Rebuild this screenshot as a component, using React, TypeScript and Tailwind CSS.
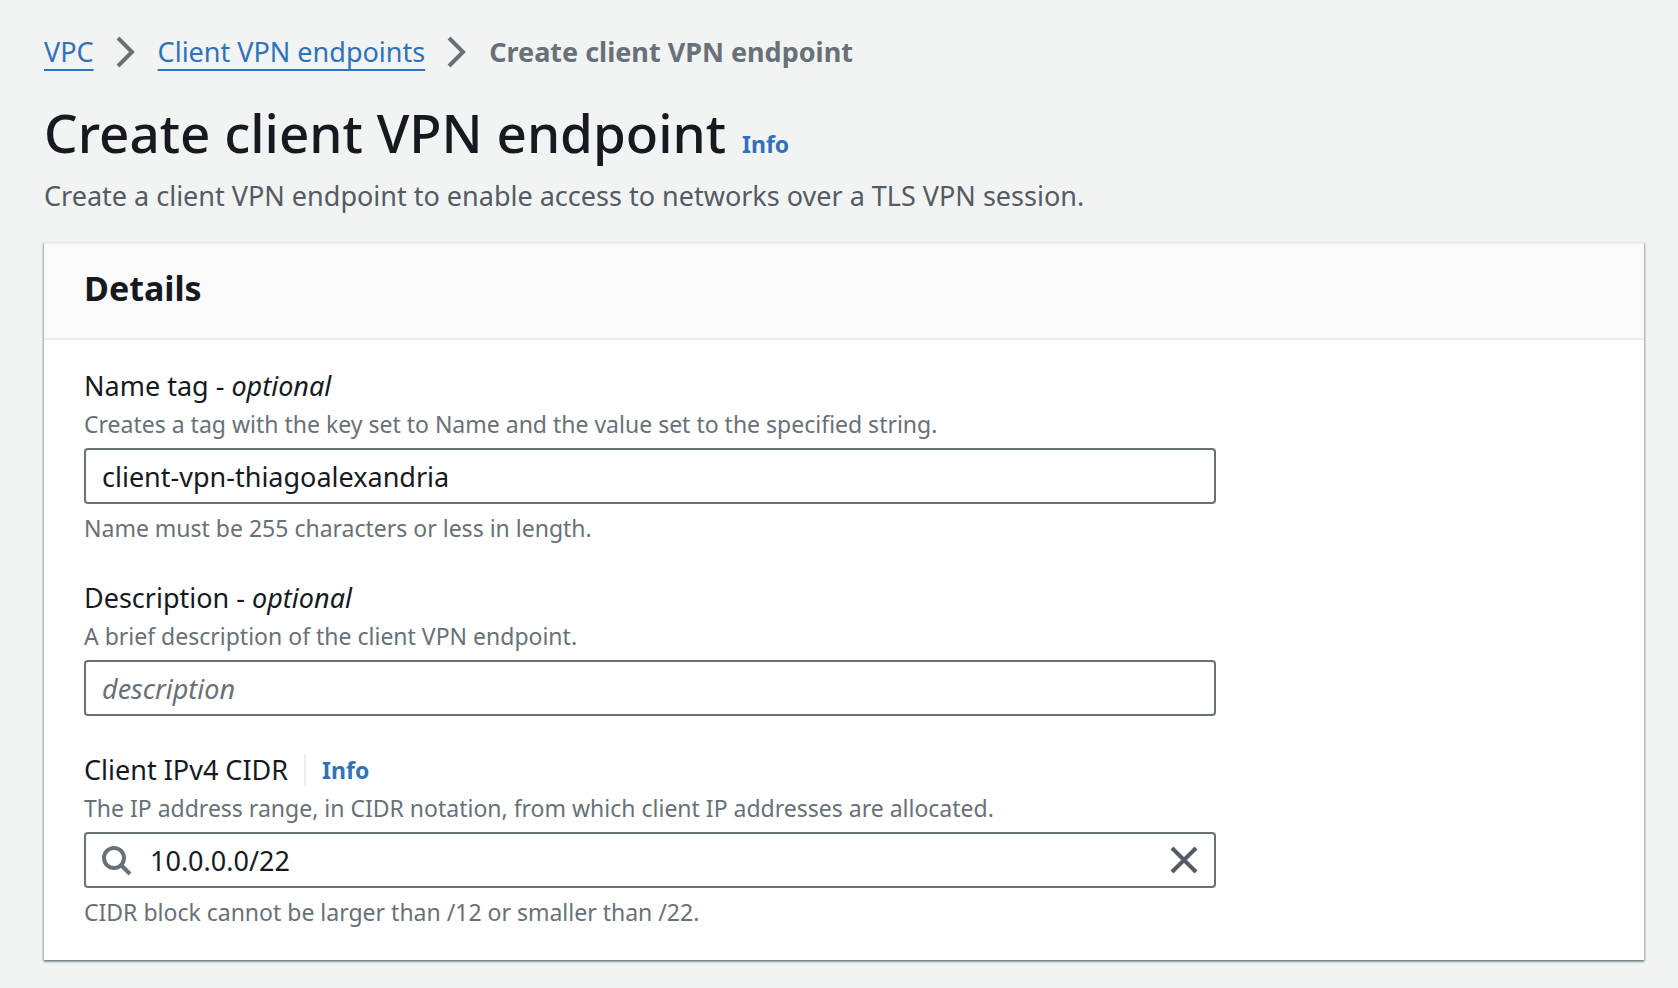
import { useState, type ReactNode } from "react";

function ChevronIcon() {
  return (
    <svg className="size-8 shrink-0 text-[#687078]" viewBox="0 0 16 16" fill="none" stroke="currentColor" strokeWidth="2" aria-hidden="true">
      <path d="m4 1 7 7-7 7" />
    </svg>
  );
}

function SearchIcon() {
  return (
    <svg className="size-8 shrink-0 text-[#687078]" viewBox="0 0 16 16" fill="none" stroke="currentColor" strokeWidth="2" aria-hidden="true">
      <circle cx="7" cy="7" r="5" />
      <path d="m15 15-4.5-4.5" />
    </svg>
  );
}

function CloseIcon() {
  return (
    <svg className="size-8" viewBox="0 0 16 16" fill="none" stroke="currentColor" strokeWidth="2" aria-hidden="true">
      <path d="m2 2 12 12M14 2 2 14" />
    </svg>
  );
}

type FieldProps = {
  id: string;
  label: string;
  optional?: boolean;
  info?: boolean;
  hint: string;
  constraint?: string;
  children: ReactNode;
};

function Field({ id, label, optional, info, hint, constraint, children }: FieldProps) {
  return (
    <div>
      <div className="flex items-center gap-4 text-[27px] leading-[44px]">
        <label htmlFor={id}>
          {label}
          {optional && (
            <>
              {" - "}
              <i>optional</i>
            </>
          )}
        </label>
        {info && (
          <a href="#cidr-info" className="flex h-8 items-center border-l-2 border-[#eaeded] pl-4 text-[23px] font-bold text-[#3072b9]">
            Info
          </a>
        )}
      </div>
      <p className="text-[23px] leading-8 text-[#687078]">{hint}</p>
      <div className="mt-2 flex h-14 items-center rounded-[4px] border-2 border-[#687078] bg-white">{children}</div>
      {constraint && <p className="mt-2 text-[23px] leading-8 text-[#687078]">{constraint}</p>}
    </div>
  );
}

const inputClass = "h-full min-w-0 flex-1 bg-transparent pt-px text-[27px] outline-none placeholder:italic placeholder:text-[#687078]";
const linkClass = "text-[#3072b9] underline decoration-2 underline-offset-[7px] [text-decoration-skip-ink:none]";

export default function App() {
  const [name, setName] = useState("client-vpn-thiagoalexandria");
  const [description, setDescription] = useState("");
  const [cidr, setCidr] = useState("10.0.0.0/22");

  return (
    <div className="min-h-screen bg-[#f2f3f3] pt-8 pr-[34px] pb-7 pl-11 font-['Noto_Sans',sans-serif] text-[#16191f]">
      <nav aria-label="Breadcrumbs">
        <ol className="flex items-center gap-4 text-[27px] leading-10">
          <li>
            <a href="#vpc" className={linkClass}>VPC</a>
          </li>
          <li aria-hidden="true"><ChevronIcon /></li>
          <li>
            <a href="#endpoints" className={linkClass}>Client VPN endpoints</a>
          </li>
          <li aria-hidden="true"><ChevronIcon /></li>
          <li className="font-bold text-[#687078]">Create client VPN endpoint</li>
        </ol>
      </nav>

      <header className="mt-6">
        <div className="flex items-baseline gap-4">
          <h1 className="text-[53px] leading-[74px] font-medium">Create client VPN endpoint</h1>
          <a href="#info" className="text-[23px] font-bold text-[#3072b9]">Info</a>
        </div>
        <p className="text-[27px] leading-[52px] text-[#545b64]">
          Create a client VPN endpoint to enable access to networks over a TLS VPN session.
        </p>
      </header>

      <section className="mt-5 border-t-2 border-[#eaeded] bg-white shadow-[0_2px_2px_rgba(0,28,36,0.3),1px_1px_2px_rgba(0,28,36,0.25),-1px_1px_2px_rgba(0,28,36,0.25)]">
        <div className="border-b-2 border-[#eaeded] bg-[#fafafa] px-10 pt-5 pb-[26px]">
          <h2 className="text-[34px] leading-[48px] font-bold">Details</h2>
        </div>
        <form className="px-10 pt-6 pb-8">
          <div className="flex w-3/4 flex-col gap-8 pr-2">
            <Field
              id="name"
              label="Name tag"
              optional
              hint="Creates a tag with the key set to Name and the value set to the specified string."
              constraint="Name must be 255 characters or less in length."
            >
              <input id="name" type="text" className={`${inputClass} px-4`} value={name} onChange={(e) => setName(e.target.value)} />
            </Field>
            <Field id="description" label="Description" optional hint="A brief description of the client VPN endpoint.">
              <input
                id="description"
                type="text"
                placeholder="description"
                className={`${inputClass} px-4`}
                value={description}
                onChange={(e) => setDescription(e.target.value)}
              />
            </Field>
            <Field
              id="cidr"
              label="Client IPv4 CIDR"
              info
              hint="The IP address range, in CIDR notation, from which client IP addresses are allocated."
              constraint="CIDR block cannot be larger than /12 or smaller than /22."
            >
              <div className="flex h-full min-w-0 flex-1 items-center gap-[18px] px-[14px]">
                <SearchIcon />
                <input id="cidr" type="text" className={inputClass} value={cidr} onChange={(e) => setCidr(e.target.value)} />
                <button type="button" aria-label="Clear" className="text-[#545b64]" onClick={() => setCidr("")}>
                  <CloseIcon />
                </button>
              </div>
            </Field>
          </div>
        </form>
      </section>
    </div>
  );
}
